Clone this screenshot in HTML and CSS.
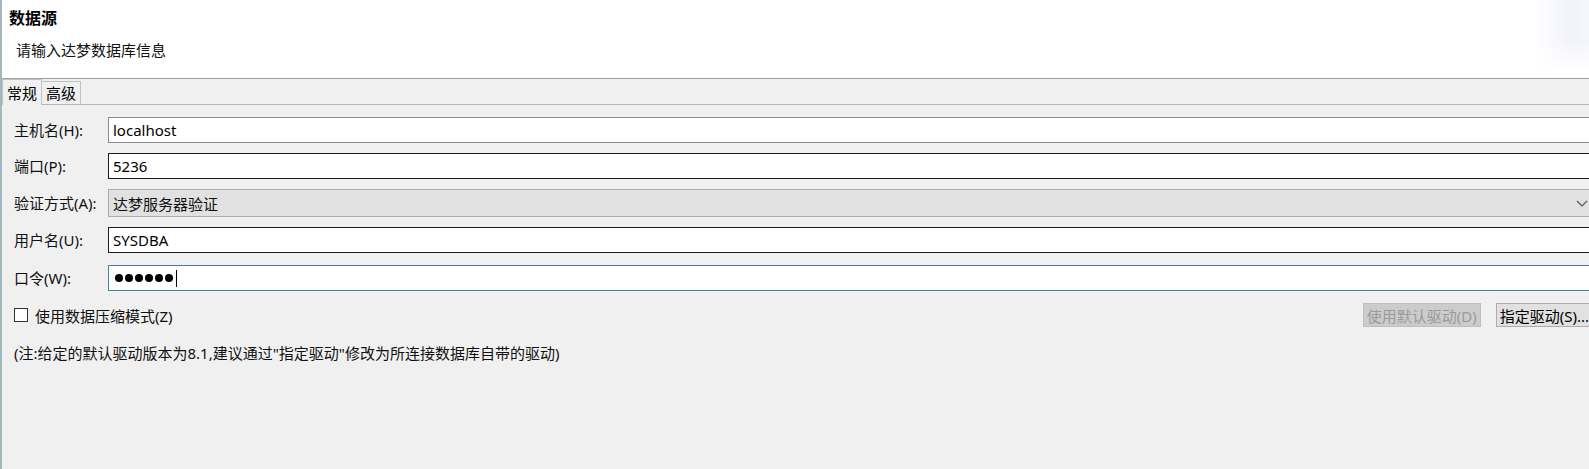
FILE: index.html
```html
<!DOCTYPE html>
<html lang="zh-CN">
<head>
    <meta charset="UTF-8">
    <title>数据源</title>
    <link rel="stylesheet" href="styles.css">
</head>
<body>
    <div class="window">
        <div class="banner">
            <div class="banner-title">数据源</div>
            <div class="banner-desc">请输入达梦数据库信息</div>
        </div>

        <div class="tabs">
            <span class="tab active">常规</span>
            <span class="tab">高级</span>
        </div>

        <div class="panel">
            <div class="form-grid">
                <label for="host">主机名(H):</label>
                <input class="field field-light" id="host" value="localhost">

                <label for="port">端口(P):</label>
                <input class="field" id="port" value="5236">

                <label>验证方式(A):</label>
                <div class="combo">
                    <span>达梦服务器验证</span>
                    <svg class="combo-arrow" width="12" height="7" viewBox="0 0 12 7">
                        <polyline points="1,1 6,6 11,1" fill="none" stroke="#555" stroke-width="1.2"/>
                    </svg>
                </div>

                <label for="user">用户名(U):</label>
                <input class="field" id="user" value="SYSDBA">

                <label class="pwd-label">口令(W):</label>
                <div class="field field-focus pwd">
                    <span class="dot"></span><span class="dot"></span><span class="dot"></span>
                    <span class="dot"></span><span class="dot"></span><span class="dot"></span>
                    <span class="caret"></span>
                </div>
            </div>

            <div class="options">
                <label class="check"><span class="box"></span>使用数据压缩模式(Z)</label>
                <div class="actions">
                    <button class="btn" disabled>使用默认驱动(D)</button>
                    <button class="btn">指定驱动(S)...</button>
                </div>
            </div>

            <p class="note">(注:给定的默认驱动版本为8.1,建议通过"指定驱动"修改为所连接数据库自带的驱动)</p>
        </div>
    </div>
</body>
</html>
```

FILE: styles.css
```css
html, body {
    margin: 0;
    padding: 0;
    height: 100%;
    overflow: hidden;
}

body {
    font-family: "Noto Sans", "Noto Sans CJK SC", sans-serif;
    font-size: 15px;
    color: #111;
    background: #f0f0f0;
}

.window {
    width: calc(100% + 4px);
    min-height: 469px;
    border-left: 2px solid #a2b7bb;
    box-sizing: border-box;
}

/* wizard banner */
.banner {
    height: 79px;
    box-sizing: border-box;
    padding: 8px 0 0 7px;
    border-bottom: 1px solid #a0a0a0;
    background:
        linear-gradient(180deg, rgba(255, 255, 255, 0) 60%, #fff 100%) no-repeat,
        linear-gradient(90deg, #fff 0, #f2f3fb 70%, #f6f7fc 100%) no-repeat,
        #fff;
    background-position: calc(100% - 4px) 0, calc(100% - 4px) 0;
    background-size: 56px 70px, 56px 70px;
}

.banner-title {
    font-weight: bold;
    font-size: 16px;
    line-height: 20px;
    color: #000;
}

.banner-desc {
    margin: 12px 0 0 7px;
    line-height: 20px;
}

/* tabs */
.tabs {
    display: flex;
    align-items: flex-end;
    height: 26px;
    box-sizing: border-box;
    border-bottom: 1px solid #b4b4b4;
}

.tab {
    height: 23px;
    line-height: 23px;
    padding: 0 4px;
    border: 1px solid #c2c2c2;
    border-bottom: none;
    box-sizing: border-box;
    color: #000;
}

.tab.active {
    height: 26px;
    line-height: 26px;
    margin-bottom: -1px;
    background: #f0f0f0;
}

.tab + .tab {
    border-left: none;
}

/* form */
.panel {
    padding: 12px 0 0 12px;
}

.form-grid {
    display: grid;
    grid-template-columns: 94px 1fr;
    row-gap: 10px;
    align-items: center;
}

.form-grid label {
    line-height: 20px;
}

.field {
    height: 26px;
    box-sizing: border-box;
    border: 1px solid #1e1e1e;
    background: #fff;
    padding: 0 4px;
    font: inherit;
    color: #000;
    outline: none;
    width: 100%;
}

.field-light {
    border-color: #8c8c8c;
}

.field-focus {
    border-color: #3b8595;
}

.combo {
    height: 28px;
    box-sizing: border-box;
    border: 1px solid #adadad;
    background: #e1e1e1;
    display: flex;
    align-items: center;
    justify-content: space-between;
    padding: 0 4px 0 4px;
}

.pwd,
.pwd-label {
    margin-top: 2px;
}

.pwd {
    display: flex;
    align-items: center;
    gap: 2px;
    padding-left: 6px;
}

.dot {
    width: 8px;
    height: 8px;
    border-radius: 50%;
    background: #000;
}

.caret {
    width: 1px;
    height: 17px;
    margin-left: 1px;
    background: #000;
}

/* bottom row */
.options {
    display: flex;
    justify-content: space-between;
    align-items: center;
    margin-top: 12px;
    height: 24px;
}

.check {
    display: flex;
    align-items: center;
    gap: 7px;
}

.box {
    width: 14px;
    height: 14px;
    box-sizing: border-box;
    border: 1px solid #333;
    background: #fff;
}

.actions {
    display: flex;
    gap: 15px;
}

.btn {
    height: 24px;
    padding: 0 3px;
    font: inherit;
    color: #000;
    background: #e1e1e1;
    border: 1px solid #adadad;
}

.btn:disabled {
    color: #9a9a9a;
    background: #cccccc;
    border-color: #bfbfbf;
}

.note {
    margin: 16px 0 0 0;
    line-height: 20px;
}
```
